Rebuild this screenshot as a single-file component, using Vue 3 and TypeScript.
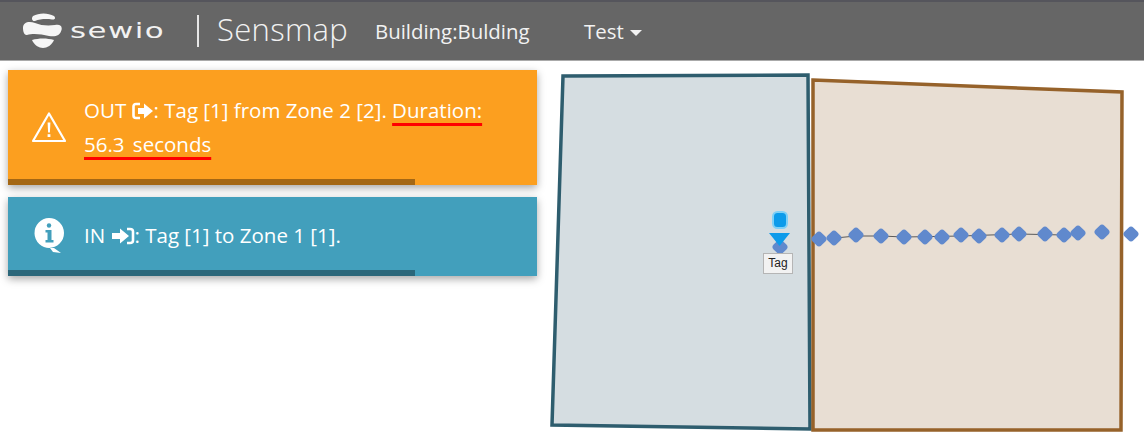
<template>
  <div class="page">
    <header class="navbar">
      <div class="brand">
        <svg class="logo" viewBox="0 0 40 36" width="40" height="36">
          <path d="M11 3 C17 -0.5 26 -0.5 32 3 C34 5 33 7 30 6.5 C24 5.5 18 6 13 8 C10 8.5 9 5 11 3 Z" fill="#f6f6f6" />
          <path d="M1 15 C1 9 7 8 13 10 C19 12.5 26 13 33 12 C38 11 40.5 13 39.5 17 C38 23 33 24 27 23 C19 21 11 20 5 22 C2 22.5 1 18 1 15 Z" fill="#f6f6f6" />
          <path d="M10 27 C17 25 25 25 32 27 C30 32 25 35 21 35 C17 35 12 32 10 27 Z" fill="#f6f6f6" />
        </svg>
        <span class="wordmark">sewio</span>
      </div>
      <span class="divider"></span>
      <span class="product">Sensmap</span>
      <span class="building">Building:Bulding</span>
      <span class="menu">Test<i class="caret"></i></span>
    </header>

    <main class="content">
      <section class="alerts">
        <div class="alert warning">
          <svg class="alert-icon" viewBox="0 0 36 32" width="36" height="32">
            <path d="M18 2.5 L34 30 H2 Z" fill="none" stroke="#fff" stroke-width="2.2" stroke-linejoin="round" />
            <path d="M16.6 11.5 H19.4 L18.9 21.5 H17.1 Z" fill="#fff" />
            <rect x="16.6" y="23.2" width="2.8" height="2.8" fill="#fff" />
          </svg>
          <p class="alert-text">
            OUT
            <svg class="inline-icon" viewBox="0 0 22 18" width="22" height="18">
              <path d="M8 2 H4 Q1.5 2 1.5 4.5 V13.5 Q1.5 16 4 16 H8" fill="none" stroke="#fff" stroke-width="2.6" />
              <path d="M6 6 H12 V1.5 L21 9 L12 16.5 V12 H6 Z" fill="#fff" />
            </svg>: Tag [1] from Zone 2 [2]. <span class="mark">Duration:</span><br />
            <span class="mark seconds">56.3 seconds</span>
          </p>
          <div class="progress" :style="{ width: progress + '%' }"></div>
        </div>

        <div class="alert info">
          <svg class="alert-icon" viewBox="0 0 32 36" width="32" height="36">
            <path d="M16 1 A15 15 0 1 1 16 31 L 21 31 L 28 36 L 20 35 L 17 31 A15 15 0 0 1 16 1 Z" fill="#fff" />
            <circle cx="16" cy="8.5" r="2.2" fill="#429fbc" />
            <path d="M12.5 13 H18.5 V23 H20.5 V25.5 H12.5 V23 H14.5 V15.5 H12.5 Z" fill="#429fbc" />
          </svg>
          <p class="alert-text">
            IN
            <svg class="inline-icon" viewBox="0 0 24 18" width="24" height="18">
              <path d="M1 6 H9 V1.5 L18 9 L9 16.5 V12 H1 Z" fill="#fff" />
              <path d="M16 2 H19 Q22 2 22 4.5 V13.5 Q22 16 19 16 H16" fill="none" stroke="#fff" stroke-width="2.6" />
            </svg>: Tag [1] to Zone 1 [1].
          </p>
          <div class="progress" :style="{ width: progress + '%' }"></div>
        </div>
      </section>

      <div class="map">
        <svg class="map-canvas" viewBox="540 60 604 375" width="604" height="375">
          <polygon points="563,75 808,74 810,428 552,424" fill="#d5dde1" stroke="#2e5d6e" stroke-width="3.5" />
          <polygon points="813,79 1122,91 1121,429 813,429" fill="#e8ded3" stroke="#96622a" stroke-width="3.5" />
          <polyline :points="trail" fill="none" stroke="#5a5a5a" stroke-width="1" />
          <rect
            v-for="(p, i) in dots"
            :key="i"
            :x="p[0] - 6.25"
            :y="p[1] - 6.25"
            width="12.5"
            height="12.5"
            rx="3.5"
            fill="#6089cd"
            :transform="`rotate(45 ${p[0]} ${p[1]})`"
          />
          <rect x="773" y="211" width="14" height="16" rx="4.5" fill="#0d9bea" stroke="#7fd0f7" stroke-width="2" />
          <polygon points="769,232 790,232 779.5,245" fill="#0d9bea" />
        </svg>
        <span class="tag-label">Tag</span>
      </div>
    </main>
  </div>
</template>

<script setup lang="ts">
import { computed } from 'vue'

const progress = 77

// tag position history, in picture coordinates
const dots: [number, number][] = [
  [780, 246], [819, 238], [834, 237], [856, 234], [881, 235], [904, 236], [925, 236], [942, 236],
  [961, 234], [979, 235], [1002, 234], [1019, 233], [1045, 233], [1064, 234], [1078, 232], [1102, 231], [1131, 233],
]

const trail = computed(() =>
  [[835, 237], [856, 235], [881, 235], [904, 236], [961, 235], [1019, 233], [1064, 234]]
    .map((p) => p.join(','))
    .join(' ')
)
</script>

<style>
html,
body {
  margin: 0;
  background: #fff;
}
</style>

<style scoped>
.page {
  width: 1144px;
  height: 435px;
  overflow: hidden;
  font-family: "Open Sans", "Liberation Sans", sans-serif;
}

.navbar {
  height: 58px;
  display: flex;
  align-items: center;
  background: #666;
  border-top: 2px solid #55555c;
  border-bottom: 1px solid #aaa;
  box-sizing: content-box;
  color: #f2f2f2;
}

.brand {
  display: flex;
  align-items: center;
  margin-left: 22px;
  width: 175px;
}

.logo {
  flex: none;
}

.wordmark {
  margin-left: 8px;
  font-family: "DejaVu Sans", sans-serif;
  font-size: 21px;
  line-height: 24px;
  letter-spacing: 1px;
  transform: scaleX(1.47);
  transform-origin: left center;
}

.divider {
  width: 2px;
  height: 32px;
  background: #e6e6e6;
}

.product {
  margin: -4px 0 0 18px;
  font-size: 31px;
  width: 150px;
  font-weight: 300;
  letter-spacing: 0.3px;
}

.building {
  margin-left: 8px;
  font-size: 20.4px;
  width: 209px;
}

.menu {
  font-size: 20.4px;
}

.caret {
  display: inline-block;
  margin-left: 6px;
  vertical-align: 3px;
  border-top: 6px solid #f2f2f2;
  border-left: 6px solid transparent;
  border-right: 6px solid transparent;
}

.content {
  display: flex;
}

.alerts {
  width: 529px;
  margin-left: 8px;
  padding-top: 9px;
  display: flex;
  flex-direction: column;
  gap: 12px;
}

.alert {
  position: relative;
  display: flex;
  align-items: center;
  box-sizing: border-box;
  padding: 0 26px 1px 23px;
  color: #fff;
  box-shadow: 0 3px 8px rgba(0, 0, 0, 0.35);
}

.warning {
  height: 115px;
  background: #fc9f1f;
}

.info {
  height: 79px;
  padding-bottom: 3px;
  background: #429fbc;
}

.alert-icon {
  flex: none;
  margin-right: 17px;
}

.info .alert-icon {
  margin-left: 2px;
  margin-right: 19px;
}

.alert-text {
  margin: 0;
  font-size: 20.5px;
  line-height: 34px;
}

.inline-icon {
  vertical-align: -2px;
}

.mark {
  text-decoration: underline #f00 3px;
  text-underline-offset: 5px;
}

.seconds {
  word-spacing: 3px;
}

.progress {
  position: absolute;
  left: 0;
  bottom: 0;
  height: 6px;
  background: rgba(0, 0, 0, 0.35);
}

.map {
  position: relative;
  width: 604px;
  margin-left: 3px;
  height: 375px;
}

.map-canvas {
  display: block;
}

.tag-label {
  position: absolute;
  left: 223px;
  top: 192px;
  width: 28px;
  height: 19px;
  border: 1px solid #b5b5b5;
  background: #f2f2f2;
  color: #222;
  font-family: "Liberation Sans", sans-serif;
  font-size: 12px;
  line-height: 19px;
  text-align: center;
}
</style>
